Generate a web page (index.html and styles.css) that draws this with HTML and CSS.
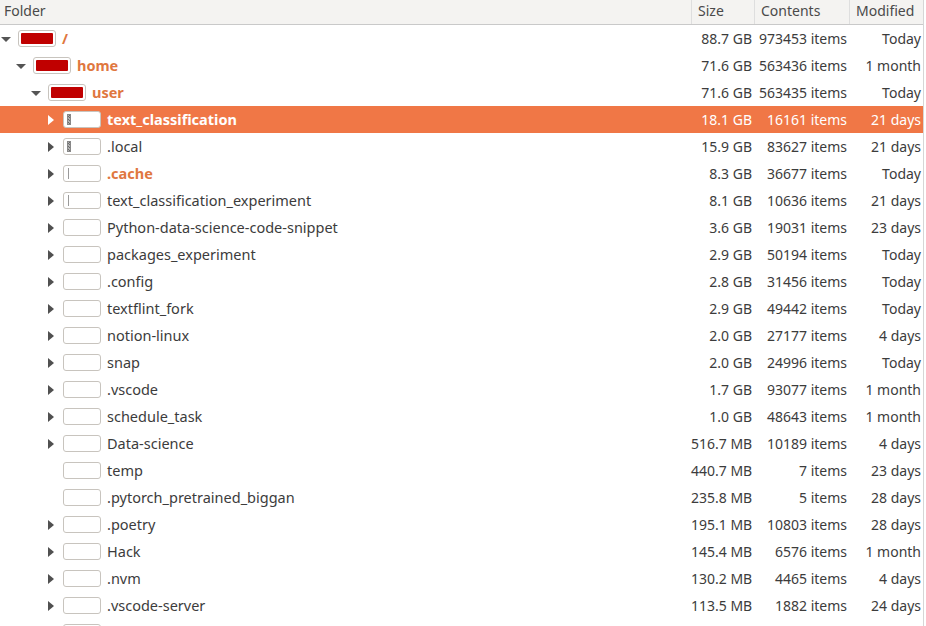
FILE: index.html
```html
<!DOCTYPE html>
<html>
<head>
<meta charset="utf-8">
<link rel="stylesheet" href="styles.css">
</head>
<body>
<div class="tree">
  <div class="header">
    <div class="hcell folder-h">Folder</div>
    <div class="hcell">Size</div>
    <div class="hcell">Contents</div>
    <div class="hcell">Modified</div>
  </div>

  <div class="row">
    <div class="name l0"><span class="exp open"></span><span class="bar"><span class="fill full"></span></span><span class="label hot">/</span></div>
    <div class="num">88.7 GB</div><div class="num">973453 items</div><div class="num">Today</div>
  </div>
  <div class="row">
    <div class="name l1"><span class="exp open"></span><span class="bar"><span class="fill full"></span></span><span class="label hot">home</span></div>
    <div class="num">71.6 GB</div><div class="num">563436 items</div><div class="num">1 month</div>
  </div>
  <div class="row">
    <div class="name l2"><span class="exp open"></span><span class="bar"><span class="fill full"></span></span><span class="label hot">user</span></div>
    <div class="num">71.6 GB</div><div class="num">563435 items</div><div class="num">Today</div>
  </div>
  <div class="row selected">
    <div class="name l3"><span class="exp closed"></span><span class="bar"><span class="fill hatch"></span></span><span class="label">text_classification</span></div>
    <div class="num">18.1 GB</div><div class="num">16161 items</div><div class="num">21 days</div>
  </div>
  <div class="row">
    <div class="name l3"><span class="exp closed"></span><span class="bar"><span class="fill hatch"></span></span><span class="label">.local</span></div>
    <div class="num">15.9 GB</div><div class="num">83627 items</div><div class="num">21 days</div>
  </div>
  <div class="row">
    <div class="name l3"><span class="exp closed"></span><span class="bar"><span class="fill thin"></span></span><span class="label hot">.cache</span></div>
    <div class="num">8.3 GB</div><div class="num">36677 items</div><div class="num">Today</div>
  </div>
  <div class="row">
    <div class="name l3"><span class="exp closed"></span><span class="bar"><span class="fill thin"></span></span><span class="label">text_classification_experiment</span></div>
    <div class="num">8.1 GB</div><div class="num">10636 items</div><div class="num">21 days</div>
  </div>
  <div class="row">
    <div class="name l3"><span class="exp closed"></span><span class="bar"></span><span class="label">Python-data-science-code-snippet</span></div>
    <div class="num">3.6 GB</div><div class="num">19031 items</div><div class="num">23 days</div>
  </div>
  <div class="row">
    <div class="name l3"><span class="exp closed"></span><span class="bar"></span><span class="label">packages_experiment</span></div>
    <div class="num">2.9 GB</div><div class="num">50194 items</div><div class="num">Today</div>
  </div>
  <div class="row">
    <div class="name l3"><span class="exp closed"></span><span class="bar"></span><span class="label">.config</span></div>
    <div class="num">2.8 GB</div><div class="num">31456 items</div><div class="num">Today</div>
  </div>
  <div class="row">
    <div class="name l3"><span class="exp closed"></span><span class="bar"></span><span class="label">textflint_fork</span></div>
    <div class="num">2.9 GB</div><div class="num">49442 items</div><div class="num">Today</div>
  </div>
  <div class="row">
    <div class="name l3"><span class="exp closed"></span><span class="bar"></span><span class="label">notion-linux</span></div>
    <div class="num">2.0 GB</div><div class="num">27177 items</div><div class="num">4 days</div>
  </div>
  <div class="row">
    <div class="name l3"><span class="exp closed"></span><span class="bar"></span><span class="label">snap</span></div>
    <div class="num">2.0 GB</div><div class="num">24996 items</div><div class="num">Today</div>
  </div>
  <div class="row">
    <div class="name l3"><span class="exp closed"></span><span class="bar"></span><span class="label">.vscode</span></div>
    <div class="num">1.7 GB</div><div class="num">93077 items</div><div class="num">1 month</div>
  </div>
  <div class="row">
    <div class="name l3"><span class="exp closed"></span><span class="bar"></span><span class="label">schedule_task</span></div>
    <div class="num">1.0 GB</div><div class="num">48643 items</div><div class="num">1 month</div>
  </div>
  <div class="row">
    <div class="name l3"><span class="exp closed"></span><span class="bar"></span><span class="label">Data-science</span></div>
    <div class="num">516.7 MB</div><div class="num">10189 items</div><div class="num">4 days</div>
  </div>
  <div class="row">
    <div class="name l3"><span class="exp none"></span><span class="bar"></span><span class="label">temp</span></div>
    <div class="num">440.7 MB</div><div class="num">7 items</div><div class="num">23 days</div>
  </div>
  <div class="row">
    <div class="name l3"><span class="exp none"></span><span class="bar"></span><span class="label">.pytorch_pretrained_biggan</span></div>
    <div class="num">235.8 MB</div><div class="num">5 items</div><div class="num">28 days</div>
  </div>
  <div class="row">
    <div class="name l3"><span class="exp closed"></span><span class="bar"></span><span class="label">.poetry</span></div>
    <div class="num">195.1 MB</div><div class="num">10803 items</div><div class="num">28 days</div>
  </div>
  <div class="row">
    <div class="name l3"><span class="exp closed"></span><span class="bar"></span><span class="label">Hack</span></div>
    <div class="num">145.4 MB</div><div class="num">6576 items</div><div class="num">1 month</div>
  </div>
  <div class="row">
    <div class="name l3"><span class="exp closed"></span><span class="bar"></span><span class="label">.nvm</span></div>
    <div class="num">130.2 MB</div><div class="num">4465 items</div><div class="num">4 days</div>
  </div>
  <div class="row">
    <div class="name l3"><span class="exp closed"></span><span class="bar"></span><span class="label">.vscode-server</span></div>
    <div class="num">113.5 MB</div><div class="num">1882 items</div><div class="num">24 days</div>
  </div>
  <div class="row">
    <div class="name l3"><span class="exp none"></span><span class="bar"></span><span class="label"></span></div>
    <div class="num"></div><div class="num"></div><div class="num"></div>
  </div>
</div>
</body>
</html>
```

FILE: styles.css
```css
html, body {
  margin: 0;
  padding: 0;
  background: #ffffff;
  overflow: hidden;
}

body {
  font-family: "Noto Sans", "Open Sans", sans-serif;
  font-size: 14px;
  color: #3c3c3c;
  width: 926px;
  height: 626px;
}

.tree {
  width: 924px;
  border-right: 1px solid #d6d6d6;
  height: 626px;
  box-sizing: border-box;
}

.header,
.row {
  display: grid;
  grid-template-columns: 691px 63px 95px 74px;
}

.header {
  height: 24px;
  background: #f4f3f1;
  border-bottom: 1px solid #c9c9c9;
  box-sizing: content-box;
}

.hcell {
  line-height: 22px;
  padding-left: 6px;
  border-left: 1px solid #dedede;
  color: #4a4a4a;
}

.hcell.folder-h {
  border-left: none;
  padding-left: 4px;
}

.row {
  height: 27px;
  align-items: center;
}

.row.selected {
  background: #f07746;
  color: #ffffff;
}

.name {
  display: flex;
  align-items: center;
  height: 27px;
}

.l0 { padding-left: 1px; }
.l1 { padding-left: 16px; }
.l2 { padding-left: 31px; }
.l3 { padding-left: 46px; }

.exp {
  width: 10px;
  height: 10px;
  margin-right: 7px;
  position: relative;
  flex: none;
}

.exp.open::after {
  content: "";
  position: absolute;
  left: 0;
  top: 3px;
  border-left: 5px solid transparent;
  border-right: 5px solid transparent;
  border-top: 5px solid #555555;
}

.exp.closed::after {
  content: "";
  position: absolute;
  left: 2px;
  top: 0;
  border-top: 5px solid transparent;
  border-bottom: 5px solid transparent;
  border-left: 6px solid #505050;
}

.selected .exp.closed::after {
  border-left-color: #ffffff;
}

.bar {
  width: 38px;
  height: 17px;
  box-sizing: border-box;
  border: 1px solid #c8c4be;
  border-radius: 3px;
  background: #ffffff;
  margin-right: 6px;
  flex: none;
  padding: 2px;
  display: flex;
}

.fill {
  display: block;
  height: 100%;
}

.fill.full {
  width: 100%;
  background: #c00000;
  border-radius: 1px;
}

.fill.hatch {
  margin-left: 1px;
  background-color: #7a7a7a;
  background-image: repeating-linear-gradient(45deg, #b0b0b0 0 1px, #6a6a6a 1px 2px);
  border: 1px solid #888;
  box-sizing: border-box;
  width: 4px;
}

.fill.thin {
  width: 1px;
  margin-left: 2px;
  background: #9a9a9a;
}

.label {
  white-space: nowrap;
  font-size: 14.5px;
  line-height: 19px;
}

.label.hot {
  color: #e0773f;
  font-weight: bold;
}

.selected .label {
  color: #ffffff;
  font-weight: bold;
}

.num {
  text-align: right;
  white-space: nowrap;
  padding-right: 2px;
}
```
